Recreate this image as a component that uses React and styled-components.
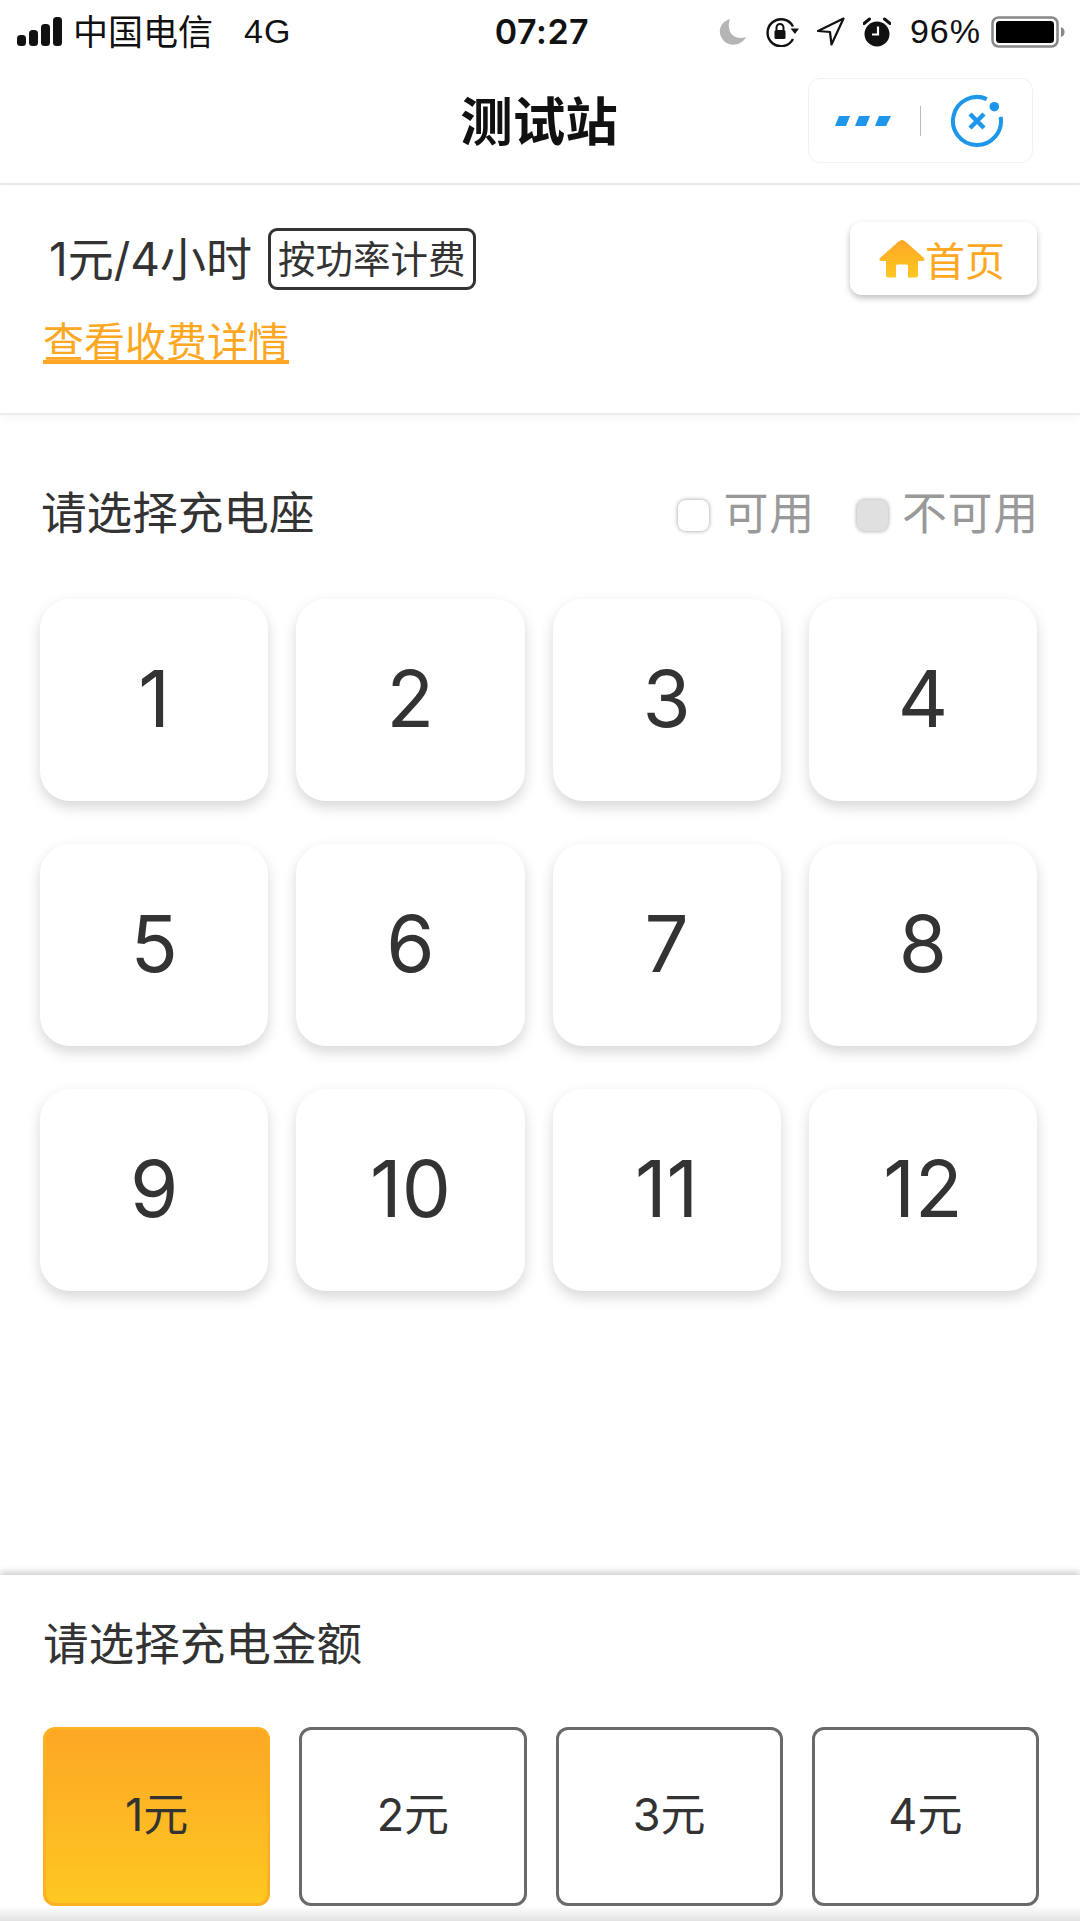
import React from 'react';
import styled, { createGlobalStyle } from 'styled-components';

const GlobalStyle = createGlobalStyle`
  html, body { margin: 0; padding: 0; background: #fff; }
  body { font-family: "Liberation Sans", "Noto Sans CJK SC", sans-serif; color: #333; }
  * { box-sizing: border-box; }
`;

const Page = styled.div`
  width: 1080px;
  height: 1921px;
  display: flex;
  flex-direction: column;
  overflow: hidden;
  background: #fff;
`;

const StatusBar = styled.div`
  height: 56px;
  display: grid;
  grid-template-columns: 1fr auto 1fr;
  align-items: center;
  padding: 4px 15px 0 17px;
  font-size: 32px;
  color: #111;
`;
const StatusLeft = styled.div`
  display: flex;
  align-items: center;
`;
const Carrier = styled.span`
  margin: 0 0 4px 11px;
  font-size: 35px;
`;
const Network = styled.span`
  margin-left: 31px;
  font-size: 34px;
  letter-spacing: 1px;
`;
const Time = styled.div`
  font-family: Inter, "Liberation Sans", sans-serif;
  font-weight: 600;
  font-size: 34px;
  letter-spacing: 0.5px;
  margin-left: 2px;
`;
const StatusRight = styled.div`
  display: flex;
  align-items: center;
  justify-content: flex-end;
`;
const Percent = styled.span`
  margin: 0 10px 0 19px;
  font-size: 34px;
  letter-spacing: 1px;
`;

const Header = styled.div`
  height: 129px;
  display: grid;
  grid-template-columns: 1fr auto 1fr;
  align-items: center;
  padding: 0 47px;
  border-bottom: 2px solid #e9e9e9;
`;
const Title = styled.div`
  grid-column: 2;
  font-size: 52.5px;
  font-weight: 700;
  color: #111;
  margin: -4px 2px 0 0;
`;
const Capsule = styled.div`
  grid-column: 3;
  justify-self: end;
  width: 225px;
  height: 85px;
  margin-top: 2px;
  display: flex;
  align-items: center;
  border: 1px solid #f1f1f1;
  border-radius: 12px;
`;
const CapsuleSide = styled.div`
  flex: 1;
  display: flex;
  align-items: center;
  justify-content: center;
`;
const CapsuleDivider = styled.div`
  width: 1px;
  height: 30px;
  background: #bbb;
`;

const InfoPanel = styled.div`
  height: 230px;
  padding: 38px 43px 0;
  display: flex;
  justify-content: space-between;
  align-items: flex-start;
  border-bottom: 2px solid #ececec;
  box-shadow: 0 4px 8px rgba(0, 0, 0, 0.03);
`;
const InfoLeft = styled.div`
  display: flex;
  flex-direction: column;
`;
const PriceRow = styled.div`
  display: flex;
  align-items: center;
  padding-left: 6px;
  font-family: Inter, "Noto Sans CJK SC", sans-serif;
  font-size: 46px;
  color: #333;
`;
const PriceText = styled.span`
  margin-bottom: 6px;
`;
const Tag = styled.span`
  margin-left: 16px;
  height: 62px;
  padding: 0 7px 5px;
  display: flex;
  align-items: center;
  font-size: 37.5px;
  border: 3px solid #333;
  border-radius: 9px;
`;
const FeeLink = styled.a`
  margin-top: 21px;
  font-size: 41px;
  line-height: 54px;
  color: #fda722;
  text-decoration: underline;
  text-underline-offset: 3px;
`;
const HomeButton = styled.div`
  width: 187px;
  height: 73px;
  margin-top: -1px;
  display: flex;
  align-items: center;
  justify-content: center;
  padding-right: 3px;
  font-size: 40px;
  color: #fda722;
  background: #fff;
  border-radius: 12px;
  box-shadow: 0 3px 6px rgba(0, 0, 0, 0.25);
`;

const SectionHead = styled.div`
  margin-top: 62px;
  padding: 0 41px;
  display: flex;
  justify-content: space-between;
  align-items: center;
`;
const SectionTitle = styled.div`
  font-size: 45.6px;
  color: #333;
`;
const Legend = styled.div`
  display: flex;
  align-items: center;
`;
const LegendItem = styled.div`
  display: flex;
  align-items: center;
  margin-left: 42px;
  font-size: 45px;
  letter-spacing: 0.7px;
  color: #999;
`;
const LegendBox = styled.span`
  width: 31px;
  height: 31px;
  margin: 11px 14px 0 0;
  border-radius: 8px;
  background: ${({ $off }) => ($off ? '#e0e0e0' : '#fff')};
  box-shadow: 0 0 4px rgba(0, 0, 0, 0.4);
`;

const SeatGrid = styled.div`
  margin-top: 56px;
  padding: 0 43px 0 40px;
  display: grid;
  grid-template-columns: repeat(4, 1fr);
  grid-auto-rows: 202px;
  column-gap: 28px;
  row-gap: 43px;
`;
const Seat = styled.div`
  display: flex;
  align-items: center;
  justify-content: center;
  padding-bottom: 3px;
  font-family: Inter, "Liberation Sans", sans-serif;
  font-size: 78px;
  color: #333;
  background: #fff;
  border-radius: 30px;
  box-shadow: 0 6px 14px rgba(0, 0, 0, 0.16);
`;

const Footer = styled.div`
  margin-top: auto;
  height: 331px;
  padding: 0 41px 0 43px;
  display: flex;
  flex-direction: column;
  background: #fff;
  box-shadow: 0 -3px 7px rgba(0, 0, 0, 0.2);
`;
const FooterTitle = styled.div`
  margin-top: 43px;
  font-size: 45.6px;
  line-height: 56px;
  color: #333;
`;
const AmountRow = styled.div`
  margin-top: 53px;
  display: grid;
  grid-template-columns: repeat(4, 1fr);
  column-gap: 29px;
`;
const Amount = styled.div`
  height: 179px;
  padding-bottom: 10px;
  display: flex;
  align-items: center;
  justify-content: center;
  font-family: Inter, "Noto Sans CJK SC", sans-serif;
  font-size: 45px;
  color: #333;
  border-radius: 12px;
  border: 3px solid ${({ $active }) => ($active ? '#fdb022' : '#6a6a6a')};
  background: ${({ $active }) => ($active ? 'linear-gradient(#fda725, #fec821)' : '#fff')};
`;
const BottomEdge = styled.div`
  height: 15px;
  flex-shrink: 0;
  background: linear-gradient(#fff, #e2e2e2);
`;

const SignalIcon = () => (
  <svg width="45" height="30" viewBox="0 0 45 30">
    <rect x="0" y="18" width="9" height="11" rx="3.5" fill="#111" />
    <rect x="12" y="13" width="9" height="16" rx="3.5" fill="#111" />
    <rect x="24" y="7" width="9" height="22" rx="3.5" fill="#111" />
    <rect x="36" y="0" width="9" height="29" rx="3.5" fill="#111" />
  </svg>
);

const MoonIcon = () => (
  <svg width="28" height="28" viewBox="0 0 28 28" style={{ marginRight: 18 }}>
    <path d="M11 1C4 3 0 9 1 15.500C2.500 23 9 27.500 16 26.500C21 26 25 23 27 19C20 21.500 13.500 19 11 13.500C9.300 9 9.500 5 11 1Z" fill="#b5b5b5" />
  </svg>
);

const RotationLockIcon = () => (
  <svg width="34" height="30" viewBox="0 0 34 30" style={{ marginRight: 17 }}>
    <path d="M28 9.500A13.500 13.500 0 1 0 28 22" fill="none" stroke="#111" strokeWidth="2.400" />
    <path d="M25.500 11.500H34L30 17Z" fill="#111" />
    <rect x="9.500" y="13" width="11" height="9" rx="1.500" fill="#111" />
    <path d="M11.500 13V10.500A3.500 3.500 0 0 1 18.500 10.500V13" fill="none" stroke="#111" strokeWidth="2" />
  </svg>
);

const LocationIcon = () => (
  <svg width="29" height="29" viewBox="0 0 29 29" style={{ marginRight: 18 }}>
    <path d="M27.500 1.500L2 14L14 15L15.500 27.500Z" fill="none" stroke="#111" strokeWidth="2.200" strokeLinejoin="round" />
  </svg>
);

const AlarmIcon = () => (
  <svg width="28" height="30" viewBox="0 0 28 30">
    <circle cx="14" cy="17" r="12.500" fill="#111" />
    <path d="M1 6.500L6.500 2M27 6.500L21.500 2" stroke="#111" strokeWidth="3" strokeLinecap="round" />
    <path d="M15 9.500V17.500H9" fill="none" stroke="#fff" strokeWidth="2.200" />
  </svg>
);

const BatteryIcon = () => (
  <svg width="74" height="32" viewBox="0 0 74 32">
    <rect x="1.500" y="1.500" width="65" height="29" rx="6" fill="none" stroke="#888" strokeWidth="2.500" />
    <rect x="5" y="5" width="58" height="22" rx="3.500" fill="#000" />
    <path d="M70 11C73 12 73.500 14 73.500 16C73.500 18 73 20 70 21Z" fill="#888" />
  </svg>
);

const MenuDots = () => (
  <svg width="56" height="12" viewBox="0 0 56 12" style={{ marginRight: 4 }}>
    <path d="M4 1H15L11 11H0Z M24 1H35L31 11H20Z M44 1H56L51 11H40Z" fill="#1e96ea" />
  </svg>
);

const CloseMark = () => (
  <svg width="54" height="54" viewBox="0 0 54 54">
    <path d="M36.800 5.100A24 24 0 1 0 50.600 22.800" fill="none" stroke="#1e96ea" strokeWidth="4" />
    <circle cx="44.300" cy="12.700" r="4.800" fill="#1e96ea" />
    <path d="M20 20L34 34M34 20L20 34" stroke="#1e96ea" strokeWidth="4.500" />
  </svg>
);

const HomeIcon = () => (
  <svg width="46" height="38" viewBox="0 0 46 38">
    <defs>
      <linearGradient id="homeFill" x1="0" y1="0" x2="0" y2="1">
        <stop offset="0" stopColor="#fda725" />
        <stop offset="1" stopColor="#fec821" />
      </linearGradient>
    </defs>
    <path d="M23 0C21.500 0 20.500 1 19 2L1 18C0 19.500 0.500 21 2 21H7V35C7 37 8 37.500 9.500 37.500H17V26C17 25 17.500 24.500 18.500 24.500H27.500C28.500 24.500 29 25 29 26V37.500H36.500C38 37.500 39 37 39 35V21H44C45.500 21 46 19.500 45 18L27 2C25.500 1 24.500 0 23 0Z" fill="url(#homeFill)" />
  </svg>
);

const seats = [1, 2, 3, 4, 5, 6, 7, 8, 9, 10, 11, 12];
const amounts = [1, 2, 3, 4];

const App = () => {
  return (
    <Page>
      <GlobalStyle />
      <StatusBar>
        <StatusLeft>
          <SignalIcon />
          <Carrier>中国电信</Carrier>
          <Network>4G</Network>
        </StatusLeft>
        <Time>07:27</Time>
        <StatusRight>
          <MoonIcon />
          <RotationLockIcon />
          <LocationIcon />
          <AlarmIcon />
          <Percent>96%</Percent>
          <BatteryIcon />
        </StatusRight>
      </StatusBar>
      <Header>
        <Title>测试站</Title>
        <Capsule>
          <CapsuleSide><MenuDots /></CapsuleSide>
          <CapsuleDivider />
          <CapsuleSide><CloseMark /></CapsuleSide>
        </Capsule>
      </Header>
      <InfoPanel>
        <InfoLeft>
          <PriceRow>
            <PriceText>1元/4小时</PriceText>
            <Tag>按功率计费</Tag>
          </PriceRow>
          <FeeLink>查看收费详情</FeeLink>
        </InfoLeft>
        <HomeButton>
          <HomeIcon />
          首页
        </HomeButton>
      </InfoPanel>
      <SectionHead>
        <SectionTitle>请选择充电座</SectionTitle>
        <Legend>
          <LegendItem><LegendBox />可用</LegendItem>
          <LegendItem><LegendBox $off />不可用</LegendItem>
        </Legend>
      </SectionHead>
      <SeatGrid>
        {seats.map((n) => <Seat key={n}>{n}</Seat>)}
      </SeatGrid>
      <Footer>
        <FooterTitle>请选择充电金额</FooterTitle>
        <AmountRow>
          {amounts.map((n) => (
            <Amount key={n} $active={n === 1}>{n}元</Amount>
          ))}
        </AmountRow>
      </Footer>
      <BottomEdge />
    </Page>
  );
};

export default App;
